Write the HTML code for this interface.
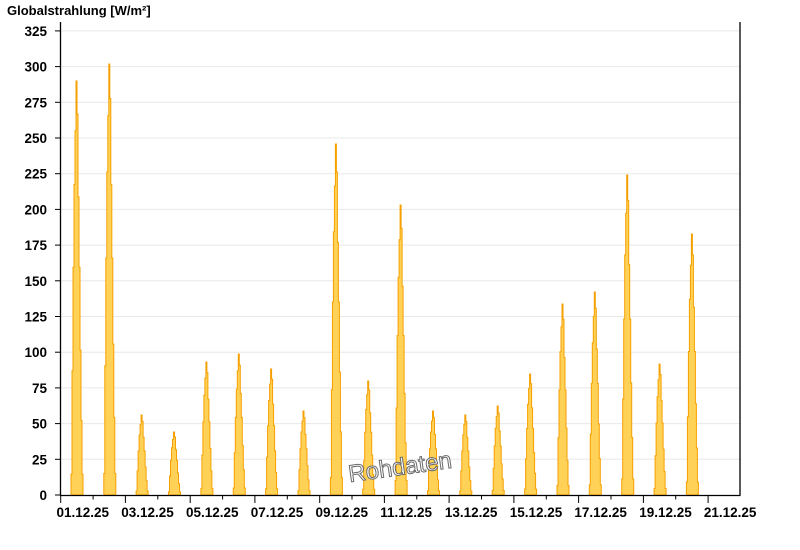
<!DOCTYPE html>
<html><head><meta charset="utf-8"><style>
html,body{margin:0;padding:0;background:#fff;width:800px;height:550px;overflow:hidden}
svg{display:block;font-family:"Liberation Sans",Arial,sans-serif;font-weight:bold}
</style></head><body>
<svg width="800" height="550" viewBox="0 0 800 550" xmlns="http://www.w3.org/2000/svg">
<defs>
<path id="pk" d="M-5.5,0 V0.05 H-4.5 V0.3 H-3.5 V0.55 H-2.5 V0.75 H-1.5 V0.88 H-0.5 V1 H0.5 V0.92 H1.5 V0.72 H2.5 V0.55 H3.5 V0.35 H4.5 V0.18 H5.5 V0.05 H6.5 V0 Z" fill="#ffd257" stroke="#f5a000" stroke-width="1" vector-effect="non-scaling-stroke"/>
</defs>
<text x="7" y="15" font-size="13" fill="#000">Globalstrahlung [W/m²]</text>
<g stroke="#e8e8e8" stroke-width="1">
<line x1="60" x2="740" y1="459.3" y2="459.3"/><line x1="60" x2="740" y1="423.6" y2="423.6"/>
<line x1="60" x2="740" y1="387.9" y2="387.9"/><line x1="60" x2="740" y1="352.2" y2="352.2"/>
<line x1="60" x2="740" y1="316.5" y2="316.5"/><line x1="60" x2="740" y1="280.8" y2="280.8"/>
<line x1="60" x2="740" y1="245.1" y2="245.1"/><line x1="60" x2="740" y1="209.4" y2="209.4"/>
<line x1="60" x2="740" y1="173.7" y2="173.7"/><line x1="60" x2="740" y1="138" y2="138"/>
<line x1="60" x2="740" y1="102.3" y2="102.3"/><line x1="60" x2="740" y1="66.6" y2="66.6"/>
<line x1="60" x2="740" y1="30.9" y2="30.9"/>
</g>
<g>
<use href="#pk" transform="translate(76.5,495) scale(1,-414)"/>
<use href="#pk" transform="translate(109.3,495) scale(1,-431)"/>
<use href="#pk" transform="translate(141.6,495) scale(1,-80)"/>
<use href="#pk" transform="translate(174.0,495) scale(1,-63)"/>
<use href="#pk" transform="translate(206.4,495) scale(1,-133)"/>
<use href="#pk" transform="translate(238.8,495) scale(1,-141)"/>
<use href="#pk" transform="translate(271.1,495) scale(1,-126)"/>
<use href="#pk" transform="translate(303.5,495) scale(1,-84)"/>
<use href="#pk" transform="translate(335.9,495) scale(1,-351)"/>
<use href="#pk" transform="translate(368.2,495) scale(1,-114)"/>
<use href="#pk" transform="translate(400.6,495) scale(1,-290)"/>
<use href="#pk" transform="translate(433.0,495) scale(1,-84)"/>
<use href="#pk" transform="translate(465.3,495) scale(1,-80)"/>
<use href="#pk" transform="translate(497.7,495) scale(1,-89)"/>
<use href="#pk" transform="translate(530.1,495) scale(1,-121)"/>
<use href="#pk" transform="translate(562.5,495) scale(1,-191)"/>
<use href="#pk" transform="translate(594.8,495) scale(1,-203)"/>
<use href="#pk" transform="translate(627.2,495) scale(1,-320)"/>
<use href="#pk" transform="translate(659.6,495) scale(1,-131)"/>
<use href="#pk" transform="translate(691.9,495) scale(1,-261)"/>
</g>
<text x="400" y="475" font-size="24" font-weight="normal" text-anchor="middle" fill="#fff" stroke="#6a6a6a" stroke-width="1" transform="rotate(-8 400 467)">Rohdaten</text>
<g stroke="#000" stroke-width="1.3">
<line x1="60.5" y1="22" x2="60.5" y2="495.5"/>
<line x1="740" y1="22" x2="740" y2="495.5"/>
<line x1="60" y1="495.5" x2="740.5" y2="495.5"/>
</g>
<g stroke="#000" stroke-width="1">
<line x1="55" x2="60" y1="495" y2="495"/><line x1="55" x2="60" y1="459.3" y2="459.3"/>
<line x1="55" x2="60" y1="423.6" y2="423.6"/><line x1="55" x2="60" y1="387.9" y2="387.9"/>
<line x1="55" x2="60" y1="352.2" y2="352.2"/><line x1="55" x2="60" y1="316.5" y2="316.5"/>
<line x1="55" x2="60" y1="280.8" y2="280.8"/><line x1="55" x2="60" y1="245.1" y2="245.1"/>
<line x1="55" x2="60" y1="209.4" y2="209.4"/><line x1="55" x2="60" y1="173.7" y2="173.7"/>
<line x1="55" x2="60" y1="138" y2="138"/><line x1="55" x2="60" y1="102.3" y2="102.3"/>
<line x1="55" x2="60" y1="66.6" y2="66.6"/><line x1="55" x2="60" y1="30.9" y2="30.9"/>
<line x1="60.7" x2="60.7" y1="495" y2="503"/><line x1="93.1" x2="93.1" y1="495" y2="499.5"/>
<line x1="125.4" x2="125.4" y1="495" y2="503"/><line x1="157.8" x2="157.8" y1="495" y2="499.5"/>
<line x1="190.2" x2="190.2" y1="495" y2="503"/><line x1="222.6" x2="222.6" y1="495" y2="499.5"/>
<line x1="254.9" x2="254.9" y1="495" y2="503"/><line x1="287.3" x2="287.3" y1="495" y2="499.5"/>
<line x1="319.7" x2="319.7" y1="495" y2="503"/><line x1="352.0" x2="352.0" y1="495" y2="499.5"/>
<line x1="384.4" x2="384.4" y1="495" y2="503"/><line x1="416.8" x2="416.8" y1="495" y2="499.5"/>
<line x1="449.1" x2="449.1" y1="495" y2="503"/><line x1="481.5" x2="481.5" y1="495" y2="499.5"/>
<line x1="513.9" x2="513.9" y1="495" y2="503"/><line x1="546.3" x2="546.3" y1="495" y2="499.5"/>
<line x1="578.6" x2="578.6" y1="495" y2="503"/><line x1="611.0" x2="611.0" y1="495" y2="499.5"/>
<line x1="643.4" x2="643.4" y1="495" y2="503"/><line x1="675.7" x2="675.7" y1="495" y2="499.5"/>
<line x1="708.1" x2="708.1" y1="495" y2="503"/>
</g>
<g font-size="13.5" fill="#000" text-anchor="end">
<text x="47" y="500">0</text><text x="47" y="464.3">25</text><text x="47" y="428.6">50</text>
<text x="47" y="392.9">75</text><text x="47" y="357.2">100</text><text x="47" y="321.5">125</text>
<text x="47" y="285.8">150</text><text x="47" y="250.1">175</text><text x="47" y="214.4">200</text>
<text x="47" y="178.7">225</text><text x="47" y="143">250</text><text x="47" y="107.3">275</text>
<text x="47" y="71.6">300</text><text x="47" y="35.9">325</text>
</g>
<g font-size="13.5" fill="#000">
<text x="56.5" y="517">01.12.25</text><text x="121.2" y="517">03.12.25</text>
<text x="186" y="517">05.12.25</text><text x="250.7" y="517">07.12.25</text>
<text x="315.5" y="517">09.12.25</text><text x="380.2" y="517">11.12.25</text>
<text x="444.9" y="517">13.12.25</text><text x="509.7" y="517">15.12.25</text>
<text x="574.4" y="517">17.12.25</text><text x="639.2" y="517">19.12.25</text>
<text x="703.9" y="517">21.12.25</text>
</g>
</svg>
</body></html>
